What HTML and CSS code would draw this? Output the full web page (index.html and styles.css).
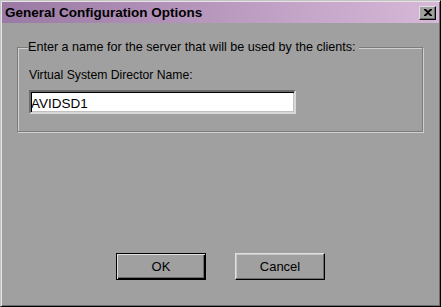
FILE: index.html
```html
<html lang="en">
<head>
    <meta charset="UTF-8">
    <title>General Configuration Options</title>
    <link rel="stylesheet" href="styles.css">
</head>
<body>
<div class="window">
  <div class="titlebar">
    <span class="title">General Configuration Options</span>
    <button class="close" title="Close">
      <svg width="8" height="7" viewBox="0 0 8 7"><path d="M0 0h2l2 2 2-2h2v1L5 3.5 8 6v1H6L4 5 2 7H0V6l3-2.5L0 1z" fill="#000"/></svg>
    </button>
  </div>
  <div class="content">
    <fieldset class="group">
      <legend>Enter a name for the server that will be used by the clients:</legend>
      <label class="label" for="vsdname">Virtual System Director Name:</label>
      <input class="field" id="vsdname" type="text" value="AVIDSD1">
    </fieldset>
    <div class="buttons">
      <button class="btn default">OK</button>
      <button class="btn">Cancel</button>
    </div>
  </div>
</div>
</body>
</html>
```

FILE: styles.css
```css
body{
  margin:0;
  background-color:#a0a0a0;
  font-family:"Liberation Sans", Arial, sans-serif;
  font-size:12px;
  color:#000;
}
.window{
  width:441px;
  height:307px;
  box-sizing:border-box;
  border-top:1px solid #c4c4c4;
  border-left:1px solid #c4c4c4;
  border-right:1px solid #000;
  border-bottom:1px solid #000;
  box-shadow:inset 1px 1px 0 #e4e4e4, inset -1px -1px 0 #6c6c6c;
  padding:1px;
  display:flex;
  flex-direction:column;
}
.titlebar{
  height:21px;
  display:flex;
  align-items:center;
  justify-content:space-between;
  padding:0 3px 0 3px;
  background:linear-gradient(to right, #9a7aa4, #d8b8d8);
}
.title{
  font-weight:bold;
  font-size:13.5px;
}
.close{
  width:17px;
  height:14px;
  padding:0;
  margin:0;
  display:flex;
  align-items:center;
  justify-content:center;
  background:#a0a0a0;
  border:1px solid;
  border-color:#e0e0e0 #000 #000 #e0e0e0;
  box-shadow:inset -1px -1px 0 #6c6c6c;
}
.content{
  flex:1;
  display:flex;
  flex-direction:column;
  padding:0 15px 25px 15px;
}
.group{
  margin:17px 0 0 0;
  padding:0 11px 17px 11px;
  border:1px solid #7c7c7c;
  box-shadow:1px 1px 0 #d0d0d0, inset 1px 1px 0 #d0d0d0;
  width:406px;
  box-sizing:border-box;
}
.group legend{
  padding:0 3px 0 0;
  margin-left:-1px;
  background:#a0a0a0;
  font-size:12.6px;
  line-height:14px;
}
.label{
  display:block;
  margin-top:14px;
  font-size:12.2px;
  line-height:14px;
}
.field{
  display:block;
  margin-top:8px;
  width:267px;
  height:24px;
  box-sizing:border-box;
  padding:2px 2px 0 0;
  font-family:"Liberation Sans", Arial, sans-serif;
  font-size:13.5px;
  background:#fff;
  border:2px solid;
  border-color:#6c6c6c #d8d8d8 #d8d8d8 #6c6c6c;
  box-shadow:inset 1px 1px 0 #000, inset -1px -1px 0 #c0c0c0;
  outline:none;
}
.buttons{
  margin-top:auto;
  display:flex;
  justify-content:center;
  gap:29px;
}
.btn{
  width:90px;
  height:27px;
  font-family:"Liberation Sans", Arial, sans-serif;
  font-size:13px;
  color:#000;
  background:#a0a0a0;
  border:1px solid;
  border-color:#e0e0e0 #000 #000 #e0e0e0;
  box-shadow:inset -1px -1px 0 #6c6c6c, inset 1px 1px 0 #c8c8c8;
  padding:0;
}
.btn.default{
  border:1px solid #000;
  box-shadow:inset 1px 1px 0 #e0e0e0, inset -1px -1px 0 #000, inset -2px -2px 0 #6c6c6c;
}
```
